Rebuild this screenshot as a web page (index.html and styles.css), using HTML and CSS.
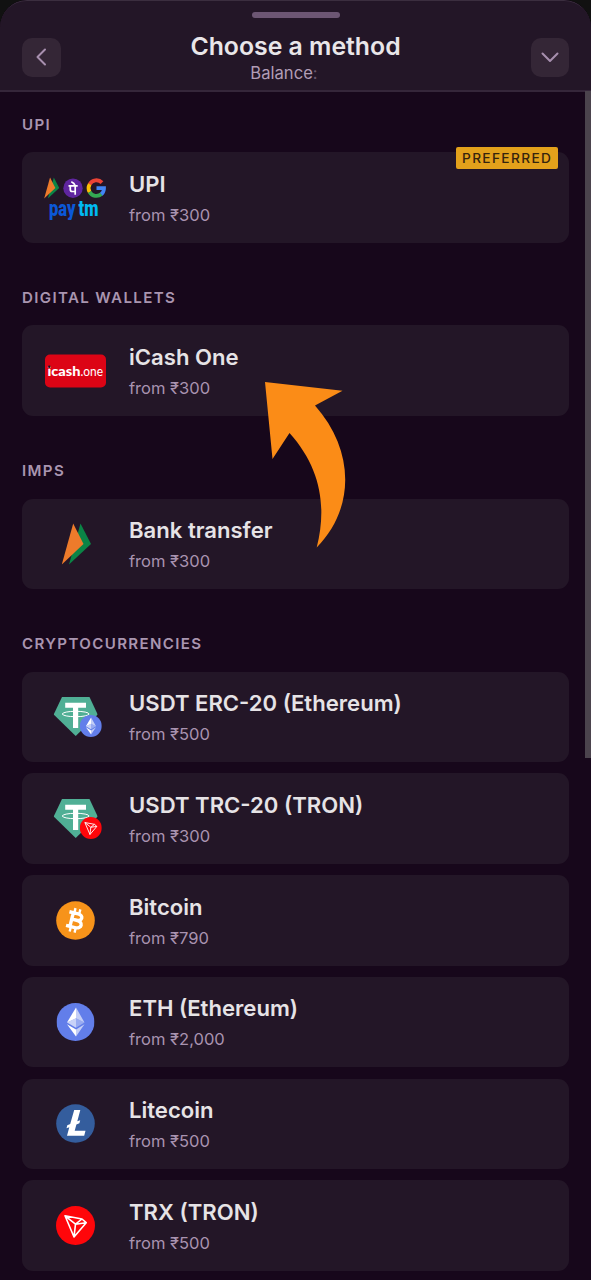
FILE: index.html
```html
<!DOCTYPE html>
<html lang="en">
<head>
<meta charset="utf-8">
<title>Choose a method</title>
<link rel="stylesheet" href="styles.css">
</head>
<body>
<svg class="defs" width="0" height="0" aria-hidden="true">
  <defs>
    <symbol id="bhim" viewBox="0 0 30 42">
      <path fill="#0b8446" d="M19 0.500L29.500 21L7.500 41.500Z"/>
      <path fill="#ee7b2b" d="M11.700 0.500L22 21L0.300 41.500Z"/>
    </symbol>
    <symbol id="eth" viewBox="0 0 38 38">
      <circle cx="19" cy="19" r="19" fill="#627eea"/>
      <path fill="#fff" d="M19.500 4.500V15.200L28 19.500Z" fill-opacity=".62"/>
      <path fill="#fff" d="M19.500 4.500L10.500 19.500L19.500 15.200Z"/>
      <path fill="#fff" d="M19.500 15.200L28 19.500L19.500 24.800Z" fill-opacity=".35"/>
      <path fill="#fff" d="M19.500 15.200L10.500 19.500L19.500 24.800Z" fill-opacity=".65"/>
      <path fill="#fff" d="M10.500 21.300L19.500 26.600V33.500Z"/>
      <path fill="#fff" d="M28 21.300L19.500 26.600V33.500Z" fill-opacity=".62"/>
    </symbol>
    <symbol id="tron" viewBox="0 0 39 39">
      <circle cx="19.500" cy="19.500" r="19.500" fill="#ff060a"/>
      <path fill="none" stroke="#fff" stroke-width="1.600" stroke-linejoin="round" d="M9 9.800L26 13L30.200 16.700L18 31ZM9 9.800L19.500 18.200L26 13M19.500 18.200L30.200 16.700M19.500 18.200L18 31"/>
    </symbol>
    <symbol id="tether" viewBox="0 0 44 39">
      <path fill="#50af95" d="M8.300 0H35.800L44 17.500L22 39L0 17.500Z"/>
      <path fill="#fff" d="M11.500 5.700H32.300V10.800H24.500V31H19.300V10.800H11.500Z"/>
      <ellipse cx="22" cy="17" rx="13.400" ry="2.700" fill="none" stroke="#fff" stroke-width="1"/>
    </symbol>
  </defs>
</svg>

<div class="sheet">
  <header class="header">
    <div class="grip"></div>
    <div class="bar">
      <button class="btn" aria-label="Back"><svg width="38" height="38" viewBox="0 0 38 38"><path d="M23 11.500L15.500 19L23 26.500"/></svg></button>
      <div class="heading">
        <h1>Choose a method</h1>
        <p>Balance<span>:</span></p>
      </div>
      <button class="btn" aria-label="Collapse"><svg width="38" height="38" viewBox="0 0 38 38"><path d="M11.500 15.500L19 23L26.500 15.500"/></svg></button>
    </div>
  </header>

  <main class="list">
    <section>
      <h2>UPI</h2>
      <div class="card">
        <span class="badge">PREFERRED</span>
        <svg class="icon" width="62" height="44" viewBox="0 0 62 44">
          <use href="#bhim" x="0" y="1" width="15.500" height="22"/>
          <circle cx="29" cy="12.200" r="9.700" fill="#5f259f"/>
          <g fill="none" stroke="#fff" stroke-width="1.700">
            <path d="M24.500 9.900H33.700M31.200 9.900V18.800M26.300 9.900V13.400Q26.300 15.500 28.400 15.500H31.200"/>
            <path d="M31.300 9.700Q30.200 7 27.300 5.800"/>
          </g>
          <g fill="none" stroke-width="3.800">
            <path stroke="#ea4335" d="M45.600 8.300A7.800 7.800 0 0 1 58 6.600"/>
            <path stroke="#fbbc05" d="M45.700 16.100A7.800 7.800 0 0 1 45.700 8.100"/>
            <path stroke="#34a853" d="M57.500 18A7.800 7.800 0 0 1 45.600 16"/>
            <path stroke="#4285f4" d="M52.500 12.200H60A7.800 7.800 0 0 1 57.300 18.200"/>
          </g>
          <g transform="translate(5 39.800) scale(1 1.350)">
            <text class="paytm" x="0" y="0" fill="#0b58d8">pay</text>
            <text class="paytm" x="29.500" y="0" fill="#00b9f1">tm</text>
          </g>
        </svg>
        <div class="info"><h3>UPI</h3><p>from ₹300</p></div>
      </div>
    </section>

    <section>
      <h2>DIGITAL WALLETS</h2>
      <div class="card">
        <svg class="icon" width="62" height="34" viewBox="0 0 62 34">
          <rect x="1" y="0.500" width="61" height="33" rx="5" fill="#dc0415"/>
          <text class="icash" x="3.500" y="21.500" textLength="33" lengthAdjust="spacingAndGlyphs">icash</text>
          <text class="icash-one" x="36.500" y="21.500" textLength="22.500" lengthAdjust="spacingAndGlyphs">.one</text>
          <circle cx="5.300" cy="12.800" r="1.300" fill="#210b18"/>
        </svg>
        <div class="info"><h3>iCash One</h3><p>from ₹300</p></div>
      </div>
    </section>

    <section>
      <h2>IMPS</h2>
      <div class="card">
        <svg class="icon" width="62" height="42" viewBox="0 0 62 42"><use href="#bhim" x="17.500" y="0" width="30" height="42"/></svg>
        <div class="info"><h3>Bank transfer</h3><p>from ₹300</p></div>
      </div>
    </section>

    <section>
      <h2>CRYPTOCURRENCIES</h2>
      <div class="card">
        <svg class="icon" width="62" height="42" viewBox="0 0 62 42">
          <use href="#tether" x="9.700" y="1" width="44" height="39"/>
          <use href="#eth" x="35.800" y="19" width="22" height="22"/>
        </svg>
        <div class="info"><h3>USDT ERC-20 (Ethereum)</h3><p>from ₹500</p></div>
      </div>
      <div class="card">
        <svg class="icon" width="62" height="42" viewBox="0 0 62 42">
          <use href="#tether" x="9.700" y="1" width="44" height="39"/>
          <use href="#tron" x="35.800" y="19" width="22" height="22"/>
        </svg>
        <div class="info"><h3>USDT TRC-20 (TRON)</h3><p>from ₹300</p></div>
      </div>
      <div class="card">
        <svg class="icon" width="62" height="39" viewBox="0 0 62 39">
          <circle cx="31.500" cy="19.500" r="19.300" fill="#f7931a"/>
          <g transform="translate(31.500 19.500) rotate(14)" fill="none" stroke="#fff">
            <path stroke-width="3.400" d="M-8 -7H1C7 -7 7 -0.500 1 -0.500H-3.500M1 -0.500C8.500 -0.500 8.500 7 1 7H-8M-4 -7V7"/>
            <path stroke-width="2.400" d="M-3 -12V-8M2 -12V-8M-3 8V12M2 8V12"/>
          </g>
        </svg>
        <div class="info"><h3>Bitcoin</h3><p>from ₹790</p></div>
      </div>
      <div class="card">
        <svg class="icon" width="62" height="38" viewBox="0 0 62 38"><use href="#eth" x="12.500" y="0" width="38" height="38"/></svg>
        <div class="info"><h3>ETH (Ethereum)</h3><p>from ₹2,000</p></div>
      </div>
      <div class="card">
        <svg class="icon" width="62" height="39" viewBox="0 0 62 39">
          <circle cx="31.500" cy="19.500" r="19.300" fill="#345d9d"/>
          <path fill="#fff" d="M30.200 6H36.300L33.300 17.300L36.200 16.200L35.400 19.300L32.400 20.400L30.700 26.700H41.500L40.200 31.700H23L25.300 23.200L22.500 24.300L23.300 21.200L26.200 20.100Z"/>
        </svg>
        <div class="info"><h3>Litecoin</h3><p>from ₹500</p></div>
      </div>
      <div class="card">
        <svg class="icon" width="62" height="39" viewBox="0 0 62 39"><use href="#tron" x="12" y="0" width="39" height="39"/></svg>
        <div class="info"><h3>TRX (TRON)</h3><p>from ₹500</p></div>
      </div>
    </section>
  </main>
  <div class="scrollbar"></div>
  <svg class="arrow" width="82" height="168" viewBox="0 0 82 168"><path fill="#fb8c17" d="M1 1L78.500 9.700L51 24.500C90.500 69 91.500 127 52.700 166.500C63 126 57 87 25.500 52L8.500 78Z"/></svg>
</div>
</body>
</html>
```

FILE: styles.css
```css
* { box-sizing: border-box; margin: 0; padding: 0; }

body {
  width: 591px;
  height: 1280px;
  overflow: hidden;
  background: #111;
  font-family: Inter, "Noto Sans", sans-serif;
}

.defs { position: absolute; }

.sheet {
  position: relative;
  height: 1280px;
  overflow: hidden;
  background: #17071b;
  border-radius: 27px 27px 0 0;
}

.header {
  height: 92px;
  padding: 11px 22px 0;
  background: #231627;
  border-top: 1px solid #3b2e3f;
  border-bottom: 2px solid #35263a;
  border-radius: 27px 27px 0 0;
}

.grip {
  width: 88px;
  height: 6px;
  margin: 0 auto;
  border-radius: 3px;
  background: #6c5673;
}

.bar { display: flex; justify-content: space-between; padding-top: 13px; }

.btn {
  width: 38.500px;
  height: 38.500px;
  margin-top: 7px;
  border: 0;
  border-radius: 10px;
  background: #342636;
}

.btn svg {
  display: block;
  fill: none;
  stroke: #a78fae;
  stroke-width: 2;
  stroke-linecap: round;
  stroke-linejoin: round;
}

.heading { text-align: center; color: #b19db6; }
.heading h1 { font-size: 24.800px; line-height: 30px; font-weight: 600; color: #e9e6e9; }
.heading p { font-size: 16.600px; line-height: 25px; padding-right: 23px; }
.heading span { color: #67566d; }

.list { padding: 22px 22px 0; }

section { padding-bottom: 44.350px; }

h2 {
  height: 38.300px;
  font-size: 15.100px;
  line-height: 22px;
  font-weight: 600;
  letter-spacing: 1.350px;
  color: #a995b0;
}

.card {
  position: relative;
  display: flex;
  align-items: center;
  gap: 23px;
  height: 90.500px;
  padding-left: 22px;
  border-radius: 11px;
  background: #231627;
}

.card + .card { margin-top: 11.250px; }

.icon { flex: none; }

.info { padding-top: 3.200px; }
.info h3 { font-size: 22.100px; line-height: 31px; font-weight: 600; color: #e6e3e6; }
.info p { font-size: 16.550px; line-height: 30px; color: #a993b0; }

.badge {
  position: absolute;
  top: -5.500px;
  right: 11px;
  width: 102px;
  height: 22px;
  padding-left: 6px;
  border-radius: 2px;
  background: #e3a11b;
  color: #35240e;
  font-size: 13.700px;
  line-height: 23px;
  font-weight: 500;
  letter-spacing: 1.350px;
}

.paytm { font: 900 16.500px Roboto, sans-serif; }
.icash { font: 900 13px Lato, sans-serif; fill: #fff; }
.icash-one { font: 400 13px Lato, sans-serif; fill: #fff; }

.scrollbar {
  position: absolute;
  top: 91px;
  right: 0;
  width: 6px;
  height: 667px;
  background: #4b434d;
}

.arrow { position: absolute; left: 264px; top: 381px; }
```
